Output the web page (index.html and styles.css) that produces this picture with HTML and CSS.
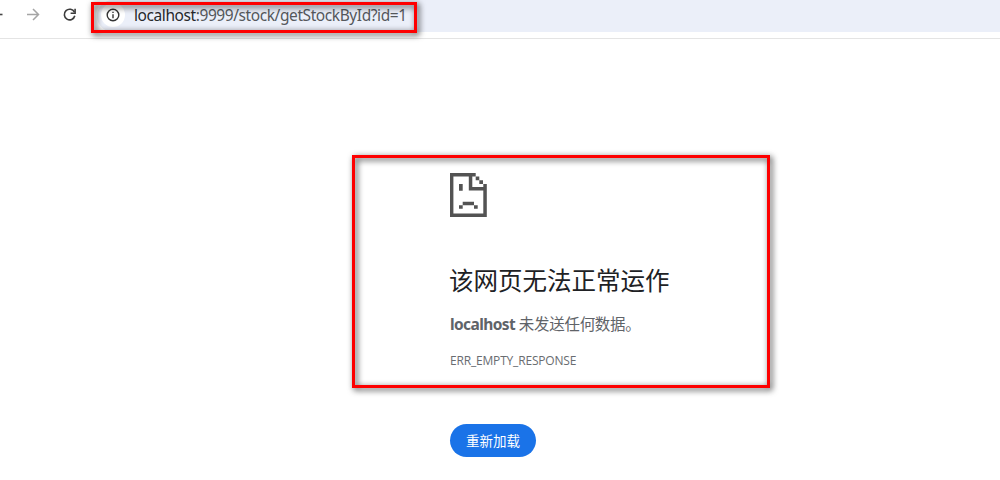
FILE: index.html
```html
<!DOCTYPE html>
<html lang="zh-CN">
<head>
<meta charset="utf-8">
<title>localhost</title>
<link rel="stylesheet" href="styles.css">
</head>
<body>
<header class="toolbar">
  <nav class="nav">
    <svg class="nav-icons" width="90" height="32" viewBox="0 0 90 32">
      <path d="M0 14.5H2.5" stroke="#474747" stroke-width="1.6"/>
      <path d="M27 14.5H38M33 9L38.5 14.5L33 20" fill="none" stroke="#a5a5a5" stroke-width="1.5"/>
      <path d="M74.4 12.2A5.3 5.3 0 1 0 74.8 15.8" fill="none" stroke="#3c3c3c" stroke-width="1.6"/>
      <path d="M75.1 8.8V13.2H70.6" fill="none" stroke="#3c3c3c" stroke-width="1.6"/>
    </svg>
  </nav>
  <div class="omnibox">
    <span class="site-info">
      <svg width="14" height="14" viewBox="0 0 14 14">
        <circle cx="7" cy="7" r="5.8" fill="none" stroke="#333" stroke-width="1.4"/>
        <path d="M7 6.2V10.2M7 3.7V5.1" stroke="#333" stroke-width="1.4"/>
      </svg>
    </span>
    <span class="url"><span class="host">localhost</span>:9999/stock/getStockById?id=1</span>
  </div>
</header>
<main class="error">
  <svg class="sad-page" width="37" height="44" viewBox="0 0 37 44" fill="#535353">
    <path fill-rule="evenodd" d="M0 0H25.7V3.5H22.3V14H33.3V11H36.8V44H0ZM3.4 3.5V40.5H33.3V17.5H18.8V3.5Z"/>
    <path d="M25.7 3.5H29.3V7.2H25.7ZM29.3 7.2H33V10.9H29.3ZM9 11H12.7V17.7H9ZM12.7 28.7H24V32.2H12.7ZM9 32.2H12.7V35.7H9ZM24 32.2H27.7V35.7H24Z"/>
  </svg>
  <h1 class="title">该网页无法正常运作</h1>
  <p class="summary"><strong class="summary-host">localhost</strong> <span>未发送任何数据。</span></p>
  <p class="code">ERR_EMPTY_RESPONSE</p>
  <button class="reload">重新加载</button>
</main>
<div class="mark mark-url"></div>
<div class="mark mark-error"></div>
</body>
</html>
```
FILE: styles.css
```css
* { box-sizing: border-box; }
body {
  margin: 0;
  width: 1000px;
  height: 480px;
  overflow: hidden;
  background: #fff;
  font-family: "Open Sans", "Noto Sans CJK SC", sans-serif;
}
.toolbar {
  display: flex;
  height: 39px;
  border-bottom: 1px solid #e4e4e4;
}
.nav { width: 97px; }
.nav-icons { display: block; }
.omnibox {
  display: flex;
  align-items: center;
  flex: 1;
  height: 32px;
  padding: 0 0 2px 4px;
  border-radius: 16px 0 0 16px;
  background: #ebeff9;
}
.site-info {
  display: flex;
  align-items: center;
  justify-content: center;
  width: 24px;
  height: 24px;
  margin-right: 9px;
  border-radius: 50%;
  background: #fff;
}
.url {
  font-family: "Noto Sans", sans-serif;
  font-size: 15.5px;
  letter-spacing: -0.42px;
  line-height: 24px;
  white-space: nowrap;
  color: #55585c;
}
.host { color: #26282b; }
.error {
  display: flex;
  flex-direction: column;
  align-items: flex-start;
  padding: 134px 0 0 450px;
}
.sad-page { display: block; }
.title {
  margin: 45px 0 0 -1px;
  font-size: 24.5px;
  font-weight: 400;
  line-height: 38px;
  color: #202124;
}
.summary {
  margin: 12px 0 0;
  font-size: 15.5px;
  line-height: 24px;
  letter-spacing: -0.3px;
  color: #5f6368;
}
.summary-host { font-family: "Noto Sans", sans-serif; letter-spacing: -0.6px; }
.code {
  margin: 15px 0 0;
  font-size: 12px;
  line-height: 20px;
  letter-spacing: -0.18px;
  color: #696c70;
}
.reload {
  width: 86px;
  height: 33px;
  margin: 53px 0 0;
  padding: 0;
  border: 0;
  border-radius: 17px;
  background: #1a73e8;
  color: #fff;
  font: 13.5px/33px "Noto Sans CJK SC", sans-serif;
}
.mark {
  position: absolute;
  border: 3px solid #fe0000;
  filter: drop-shadow(2px 2px 3px rgba(0, 0, 0, 0.8));
}
.mark-url { left: 91px; top: 2px; width: 326px; height: 31px; }
.mark-error { left: 352px; top: 155px; width: 418px; height: 233px; }
```
